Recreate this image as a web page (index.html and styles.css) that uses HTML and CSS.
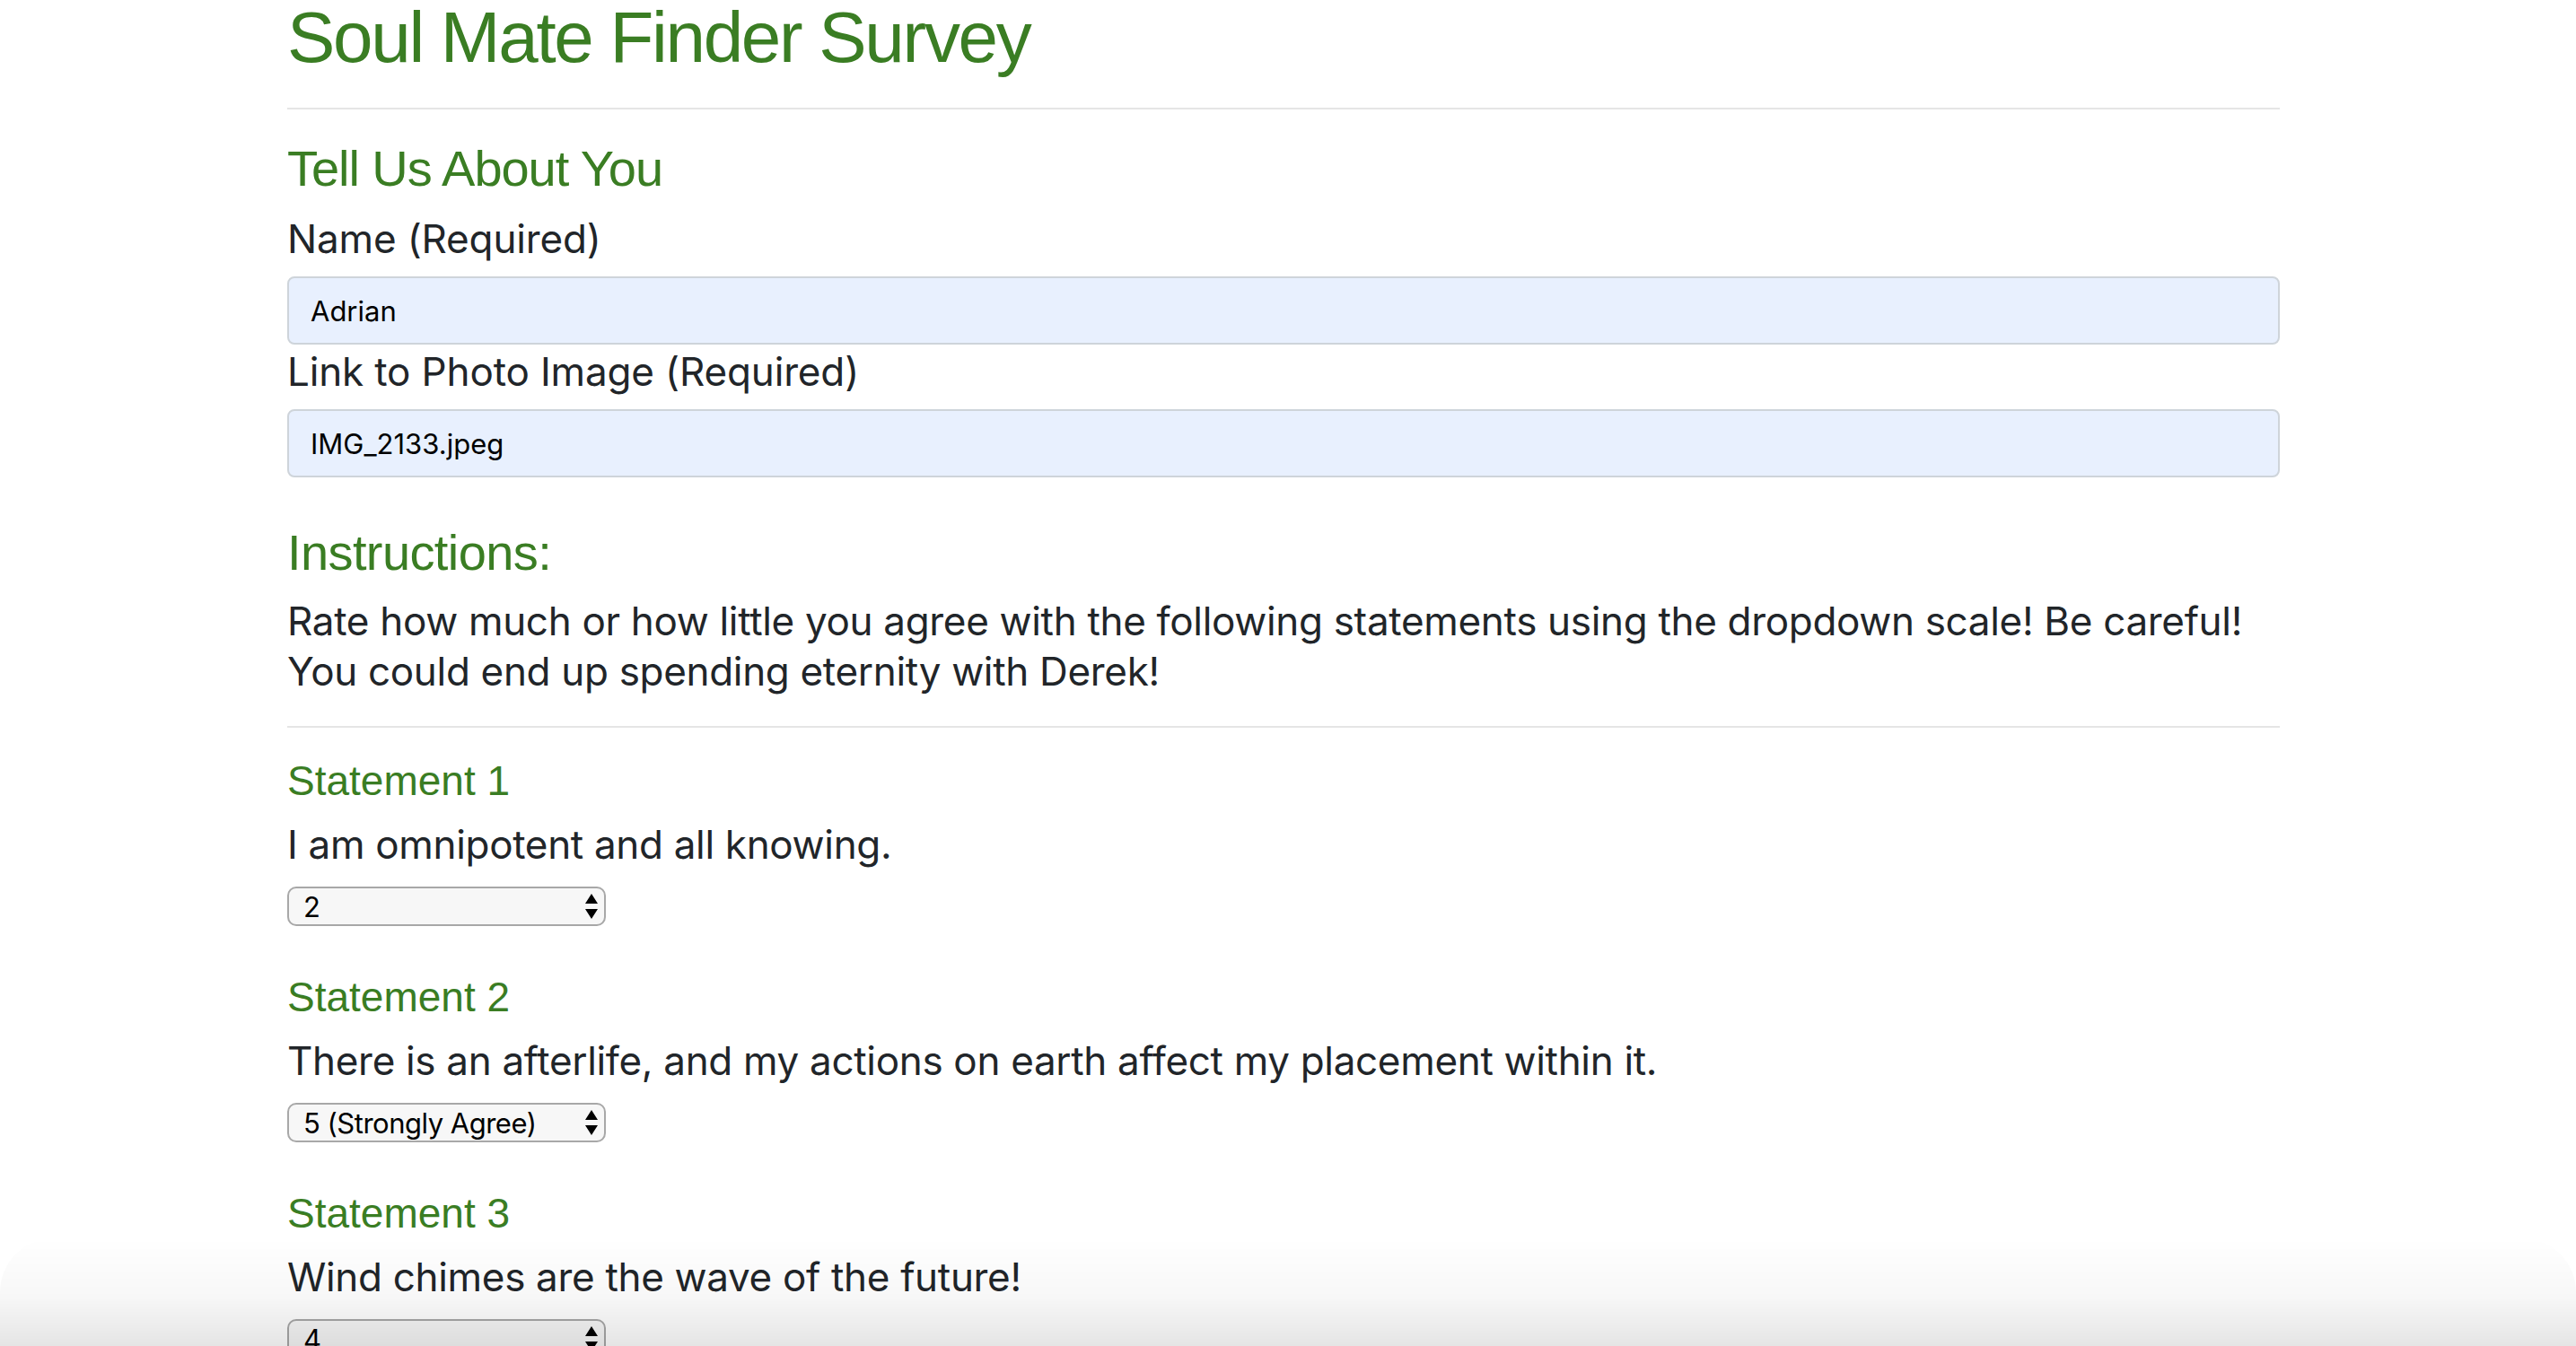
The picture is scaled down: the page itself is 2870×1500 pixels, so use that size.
FILE: index.html
```html
<!DOCTYPE html>
<html lang="en">
<head>
<meta charset="utf-8">
<title>Soul Mate Finder Survey</title>
<link rel="stylesheet" href="styles.css">
</head>
<body>
<main class="page">
  <h1 class="title">Soul Mate Finder Survey</h1>
  <hr class="rule rule-top">

  <h3 class="section">Tell Us About You</h3>
  <label class="field-label" for="name">Name (Required)</label>
  <input class="field" id="name" type="text" value="Adrian">
  <label class="field-label field-label-next" for="photo">Link to Photo Image (Required)</label>
  <input class="field" id="photo" type="text" value="IMG_2133.jpeg">

  <h3 class="section section-instr">Instructions:</h3>
  <p class="lead">Rate how much or how little you agree with the following statements using the dropdown scale! Be careful! You could end up spending eternity with Derek!</p>
  <hr class="rule rule-mid">

  <section class="statement">
    <h4 class="statement-title">Statement 1</h4>
    <p class="statement-text">I am omnipotent and all knowing.</p>
    <div class="select-wrap">
      <select class="scale">
        <option>1 (Strongly Disagree)</option>
        <option selected>2</option>
        <option>3</option>
        <option>4</option>
        <option>5 (Strongly Agree)</option>
      </select>
      <svg class="arrows" viewBox="0 0 14 28" width="14" height="28" aria-hidden="true"><path d="M7 0 L14 11 L0 11 Z M0 17 L14 17 L7 28 Z" fill="#000"/></svg>
    </div>
  </section>

  <section class="statement">
    <h4 class="statement-title">Statement 2</h4>
    <p class="statement-text">There is an afterlife, and my actions on earth affect my placement within it.</p>
    <div class="select-wrap">
      <select class="scale">
        <option>1 (Strongly Disagree)</option>
        <option>2</option>
        <option>3</option>
        <option>4</option>
        <option selected>5 (Strongly Agree)</option>
      </select>
      <svg class="arrows" viewBox="0 0 14 28" width="14" height="28" aria-hidden="true"><path d="M7 0 L14 11 L0 11 Z M0 17 L14 17 L7 28 Z" fill="#000"/></svg>
    </div>
  </section>

  <section class="statement">
    <h4 class="statement-title">Statement 3</h4>
    <p class="statement-text">Wind chimes are the wave of the future!</p>
    <div class="select-wrap">
      <select class="scale">
        <option>1 (Strongly Disagree)</option>
        <option>2</option>
        <option>3</option>
        <option selected>4</option>
        <option>5 (Strongly Agree)</option>
      </select>
      <svg class="arrows" viewBox="0 0 14 28" width="14" height="28" aria-hidden="true"><path d="M7 0 L14 11 L0 11 Z M0 17 L14 17 L7 28 Z" fill="#000"/></svg>
    </div>
  </section>
</main>
<div class="bottom-fade"></div>
</body>
</html>
```

FILE: styles.css
```css
html, body {
  margin: 0;
  padding: 0;
  background: #ffffff;
}

body {
  font-family: Inter, "Liberation Sans", sans-serif;
  color: #212529;
  overflow: hidden;
}

.page {
  width: 2220px;
  margin-left: 320px;
}

.title {
  font-family: "Liberation Sans", Arial, sans-serif;
  font-weight: 400;
  font-size: 80px;
  line-height: 96px;
  letter-spacing: -2.3px;
  color: #3a7d23;
  margin: -6px 0 0;
}

.rule {
  border: 0;
  border-top: 2px solid #e5e5e5;
  height: 0;
}

.rule-top {
  margin: 30px 0 32px;
}

.rule-mid {
  margin: 33px 0 33px;
}

.section {
  font-family: "Liberation Sans", Arial, sans-serif;
  font-weight: 400;
  font-size: 56px;
  line-height: 67px;
  letter-spacing: -1.05px;
  color: #3a7d23;
  margin: 0 0 19px;
}

.section-instr {
  margin-top: 50px;
  margin-bottom: 15px;
  letter-spacing: -0.6px;
}

.field-label {
  display: block;
  font-size: 44px;
  line-height: 53px;
  letter-spacing: -0.15px;
  margin-bottom: 15px;
}

.field-label-next {
  margin-top: 4px;
}

.field {
  display: block;
  box-sizing: border-box;
  width: 100%;
  height: 76px;
  margin: 0;
  padding: 0 24px;
  font-family: Inter, "Liberation Sans", sans-serif;
  font-size: 31px;
  color: #000;
  background: #e8f0fe;
  border: 2px solid #ced4da;
  border-radius: 8px;
  outline: none;
}

.lead {
  font-size: 44px;
  line-height: 56px;
  letter-spacing: -0.32px;
  margin: 0;
}

.statement {
  margin-bottom: 53px;
}

.statement-title {
  font-family: "Liberation Sans", Arial, sans-serif;
  font-weight: 400;
  font-size: 46px;
  line-height: 53px;
  color: #3a7d23;
  margin: 0 0 16px;
}

.statement-text {
  font-size: 44px;
  line-height: 56px;
  letter-spacing: -0.32px;
  margin: 0 0 19px;
}

.select-wrap {
  position: relative;
  width: 355px;
  height: 44px;
}

.scale {
  -webkit-appearance: none;
  appearance: none;
  box-sizing: border-box;
  width: 355px;
  height: 44px;
  margin: 0;
  padding: 0 40px 0 16px;
  font-family: Inter, "Liberation Sans", sans-serif;
  font-size: 31px;
  letter-spacing: -0.5px;
  color: #000;
  background: #f7f7f7;
  border: 2px solid #a8a8a8;
  border-radius: 10px;
  outline: none;
}

.arrows {
  position: absolute;
  right: 9px;
  top: 8px;
  pointer-events: none;
}

.bottom-fade {
  position: fixed;
  left: 0;
  right: 0;
  bottom: 0;
  height: 120px;
  background: linear-gradient(to bottom, rgba(0, 0, 0, 0) 0%, rgba(0, 0, 0, 0.03) 55%, rgba(0, 0, 0, 0.1) 100%);
  border-radius: 60px 60px 0 0;
  pointer-events: none;
}
```
